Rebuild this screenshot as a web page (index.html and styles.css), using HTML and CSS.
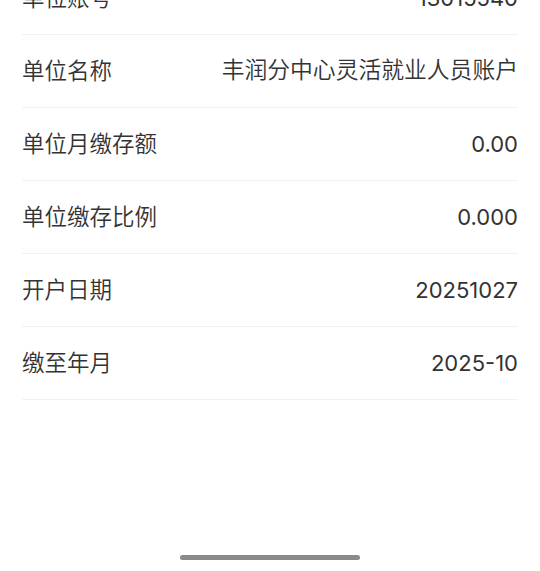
FILE: index.html
```html
<!DOCTYPE html>
<html>
<head>
  <title>单位信息</title>
  <link rel="stylesheet" href="styles.css">
</head>
<body>
  <div class="page">
    <ul class="info-list">
      <li class="info-row">
        <span class="info-label">单位账号</span>
        <span class="info-value">13015540</span>
      </li>
      <li class="info-row">
        <span class="info-label">单位名称</span>
        <span class="info-value text">丰润分中心灵活就业人员账户</span>
      </li>
      <li class="info-row">
        <span class="info-label">单位月缴存额</span>
        <span class="info-value">0.00</span>
      </li>
      <li class="info-row">
        <span class="info-label">单位缴存比例</span>
        <span class="info-value">0.000</span>
      </li>
      <li class="info-row">
        <span class="info-label">开户日期</span>
        <span class="info-value">20251027</span>
      </li>
      <li class="info-row">
        <span class="info-label">缴至年月</span>
        <span class="info-value">2025-10</span>
      </li>
    </ul>

    <div class="home-bar">
      <span class="home-indicator"></span>
    </div>
  </div>
</body>
</html>
```

FILE: styles.css
```css
:root {
  --text: #333333;
  --border: #f2f2f2;
  --indicator: #8a8a8a;
}

body {
  margin: 0;
  width: 540px;
  height: 571px;
  overflow: hidden;
  background: #ffffff;
  font-family: "Noto Sans CJK SC", "Noto Sans", sans-serif;
  color: var(--text);
}

.page {
  display: flex;
  flex-direction: column;
  height: 571px;
}

/* list is scrolled, first row is cut at the top */
.info-list {
  list-style: none;
  margin: -38px 22px 0;
  padding: 0;
}

.info-row {
  display: flex;
  justify-content: space-between;
  align-items: center;
  box-sizing: content-box;
  height: 68px;
  padding-bottom: 4px;
  border-bottom: 1px solid var(--border);
  font-size: 22.5px;
  font-weight: 350;
  line-height: 1;
}

.info-label {
  color: var(--text);
}

.info-value {
  color: var(--text);
  text-align: right;
  padding-top: 4px;
  font-family: "Inter", "Noto Sans CJK SC", sans-serif;
  font-size: 22px;
  font-weight: 400;
}

.info-value.text {
  padding-top: 0;
  font-family: "Noto Sans CJK SC", sans-serif;
  font-size: 22.8px;
  font-weight: 350;
}

.home-bar {
  margin-top: auto;
  display: flex;
  justify-content: center;
  padding-bottom: 11px;
}

.home-indicator {
  width: 180px;
  height: 5px;
  border-radius: 3px;
  background: var(--indicator);
}
```
